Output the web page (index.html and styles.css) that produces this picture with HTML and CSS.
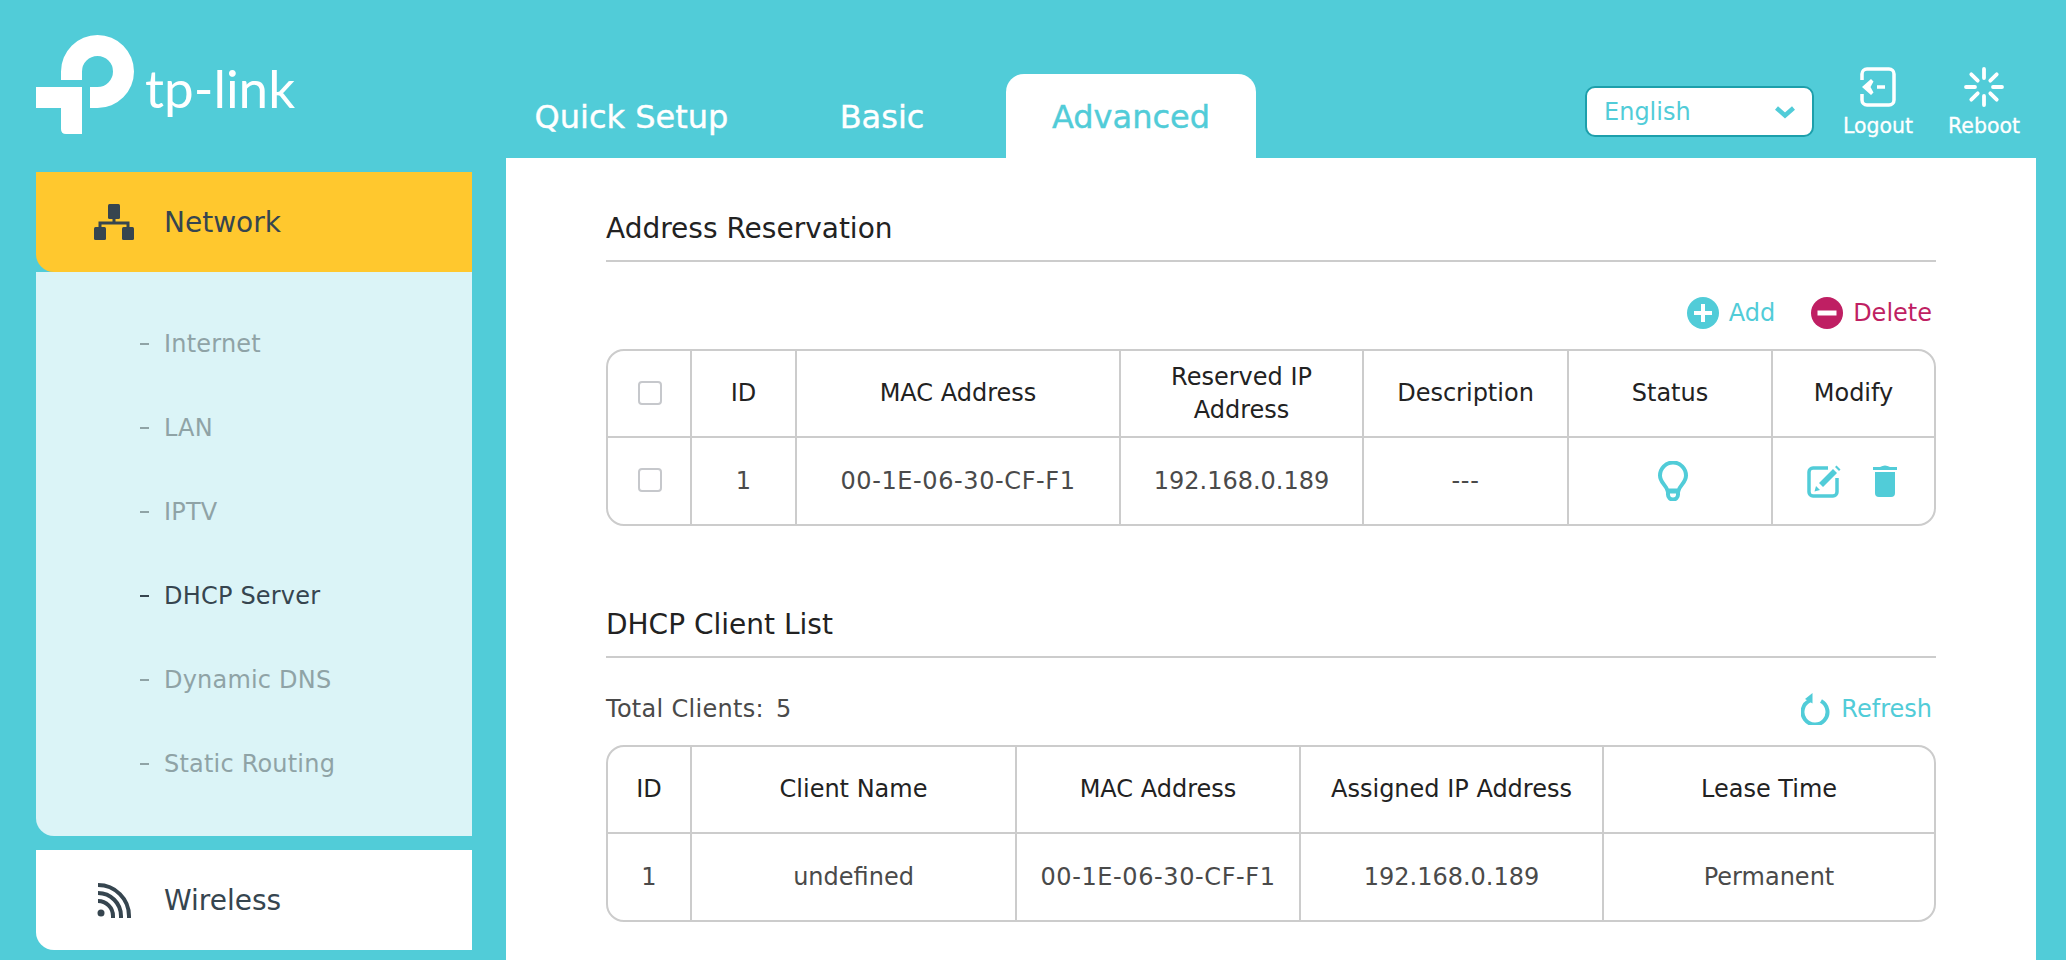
FILE: index.html
```html
<!DOCTYPE html>
<html lang="en">
<head>
  <meta charset="UTF-8" />
  <meta name="viewport" content="width=device-width, initial-scale=1.0" />
  <title>TP-Link - Address Reservation</title>
  <link rel="stylesheet" href="styles.css">
</head>

<body>
  <header class="top">
    <div class="logo">
      <svg class="logo-mark" viewBox="36 35 99 100" width="99" height="100">
        <path d="M61 80V71.500A36.500 36.500 0 1 1 97.500 108H90V87H97.500A15.500 15.500 0 1 0 82 71.500V80Z" fill="#fff"/>
        <path d="M36 87H82V134H66Q61 134 61 129V108H36Z" fill="#fff"/>
      </svg>
      <span class="logo-text">tp-link</span>
    </div>

    <nav class="tabs">
      <a class="tab tab-quick">Quick Setup</a>
      <a class="tab tab-basic">Basic</a>
      <a class="tab active">Advanced</a>
    </nav>

    <div class="tools">
      <div class="lang">
        <span>English</span>
        <svg viewBox="0 0 22 14" width="22" height="14"><path d="M2.500 3l8.500 7.500L19.500 3" fill="none" stroke="#51ccd8" stroke-width="4.500"/></svg>
      </div>
      <a class="tool tool-logout">
        <svg viewBox="0 0 36 40" width="36" height="40">
          <path d="M2 13V7a5 5 0 0 1 5-5h22a5 5 0 0 1 5 5v26a5 5 0 0 1-5 5H7a5 5 0 0 1-5-5v-6" fill="none" stroke="#fff" stroke-width="3.500"/>
          <path d="M2 20l9-8 2.500 2.500-3 5.500 3 5.500L11 28Z" fill="#fff"/>
          <path d="M17 20h8" stroke="#fff" stroke-width="3.500"/>
        </svg>
        <span>Logout</span>
      </a>
      <a class="tool tool-reboot">
        <svg viewBox="0 0 40 40" width="40" height="40" stroke="#fff" stroke-width="3.800" stroke-linecap="round">
          <path d="M20 2v9M20 29v9M2 20h9M29 20h9M7.300 7.300l6.400 6.400M26.300 26.300l6.400 6.400M7.300 32.700l6.400-6.400M26.300 13.700l6.400-6.400"/>
        </svg>
        <span>Reboot</span>
      </a>
    </div>
  </header>

  <div class="page">
    <aside class="side">
      <div class="menu-head current">
        <svg class="menu-icon" viewBox="0 0 40 36" width="40" height="36">
          <rect x="14" y="0" width="12" height="15" rx="1.500" fill="#36454f"/>
          <rect x="0" y="23" width="12" height="13" rx="1.500" fill="#36454f"/>
          <rect x="28" y="23" width="12" height="13" rx="1.500" fill="#36454f"/>
          <path d="M20 14v5M6 25v-6h28v6" fill="none" stroke="#36454f" stroke-width="3"/>
        </svg>
        <span>Network</span>
      </div>
      <ul class="submenu">
        <li>Internet</li>
        <li>LAN</li>
        <li>IPTV</li>
        <li class="on">DHCP Server</li>
        <li>Dynamic DNS</li>
        <li>Static Routing</li>
      </ul>
      <div class="menu-head">
        <svg class="menu-icon wifi" viewBox="0 0 34 35" width="34" height="35" fill="none" stroke="#36454f" stroke-width="4">
          <circle cx="4" cy="30" r="3.500" fill="#36454f" stroke="none"/>
          <path d="M1 18A15 15 0 0 1 16 33V35M1 10A23 23 0 0 1 24 33V35M1 2A31 31 0 0 1 32 33V35"/>
        </svg>
        <span>Wireless</span>
      </div>
    </aside>

    <main class="content">
      <section class="block">
        <h2>Address Reservation</h2>
        <div class="actions right">
          <a class="act add">
            <svg viewBox="0 0 32 32" width="32" height="32"><circle cx="16" cy="16" r="16" fill="#51ccd8"/><path d="M16 7v18M7 16h18" stroke="#fff" stroke-width="4"/></svg>
            Add
          </a>
          <a class="act del">
            <svg viewBox="0 0 32 32" width="32" height="32"><circle cx="16" cy="16" r="16" fill="#bf1f63"/><path d="M6.500 16h19" stroke="#fff" stroke-width="5"/></svg>
            Delete
          </a>
        </div>
        <div class="grid-wrap">
          <table class="grid">
            <colgroup>
              <col class="w84"><col class="w105"><col class="w324"><col class="w243"><col class="w205"><col class="w204"><col>
            </colgroup>
            <tr>
              <th><input type="checkbox" class="check"></th>
              <th>ID</th>
              <th>MAC Address</th>
              <th>Reserved IP<br>Address</th>
              <th>Description</th>
              <th>Status</th>
              <th>Modify</th>
            </tr>
            <tr>
              <td><input type="checkbox" class="check"></td>
              <td>1</td>
              <td class="mac">00-1E-06-30-CF-F1</td>
              <td>192.168.0.189</td>
              <td class="mac">---</td>
              <td>
                <svg class="row-icon" viewBox="0 0 30 40" width="30" height="40" fill="none" stroke="#51ccd8" stroke-width="4">
                  <path d="M9.500 29.500C8 24 2 21.500 2 14.500a13 13 0 0 1 26 0c0 7-6 9.500-7.500 15Z"/>
                  <path d="M10 30.500h10v3a5 5 0 0 1-10 0Z"/>
                </svg>
              </td>
              <td>
                <span class="modify">
                  <svg viewBox="0 0 34 34" width="34" height="34">
                    <path d="M21 4H6a4 4 0 0 0-4 4v20a4 4 0 0 0 4 4h20a4 4 0 0 0 4-4V14" fill="none" stroke="#51ccd8" stroke-width="3.500"/>
                    <path d="M12 19L26 5l4 4-14 14ZM9 22l4 4-5.500 1.500ZM28 3l1.500-1.500 4 4L32 7Z" fill="#51ccd8"/>
                  </svg>
                  <svg viewBox="0 0 24 32" width="24" height="32">
                    <path d="M0 3.500h24" stroke="#51ccd8" stroke-width="3"/>
                    <path d="M7 2q5-3 10 0Z" fill="#51ccd8"/>
                    <path d="M2 7h20v21a4 4 0 0 1-4 4H6a4 4 0 0 1-4-4Z" fill="#51ccd8"/>
                  </svg>
                </span>
              </td>
            </tr>
          </table>
        </div>
      </section>

      <section class="block second">
        <h2>DHCP Client List</h2>
        <div class="actions">
          <div class="total">Total Clients:<b>5</b></div>
          <a class="act add refresh">
            <svg viewBox="0 0 30 32" width="30" height="32" fill="none">
              <path d="M9 7.500a12.500 12.500 0 1 0 11 .5" stroke="#51ccd8" stroke-width="4"/>
              <path d="M11.500 0v10.500L4 6Z" fill="#51ccd8"/>
            </svg>
            Refresh
          </a>
        </div>
        <div class="grid-wrap">
          <table class="grid">
            <colgroup>
              <col class="w84"><col class="w325"><col class="w284"><col class="w303"><col>
            </colgroup>
            <tr>
              <th>ID</th>
              <th>Client Name</th>
              <th>MAC Address</th>
              <th>Assigned IP Address</th>
              <th>Lease Time</th>
            </tr>
            <tr>
              <td>1</td>
              <td>undefined</td>
              <td class="mac">00-1E-06-30-CF-F1</td>
              <td>192.168.0.189</td>
              <td>Permanent</td>
            </tr>
          </table>
        </div>
      </section>
    </main>
  </div>
</body>
</html>
```

FILE: styles.css
```css
* {
  box-sizing: border-box;
}

html, body {
  height: 960px;
  overflow: hidden;
}

body {
  margin: 0;
  background: #51ccd8;
  color: #36454f;
  font-family: "DejaVu Sans", Verdana, sans-serif;
}

.top {
  display: flex;
  height: 158px;
}

.logo {
  display: flex;
  align-items: flex-start;
  width: 486px;
  padding: 35px 0 0 36px;
}

.logo-text {
  margin: 23px 0 0 10px;
  color: #fff;
  font-family: Lato, sans-serif;
  font-size: 53px;
  font-weight: 400;
  line-height: 60px;
}

.tabs {
  display: flex;
  align-items: flex-end;
  width: 1099px;
}

.tab {
  display: flex;
  align-items: center;
  justify-content: center;
  height: 84px;
  padding-top: 2px;
  color: #fff;
  font-size: 32px;
  -webkit-text-stroke: 0.4px;
}

.tab-quick {
  width: 291px;
}

.tab-basic {
  width: 229px;
  padding-right: 19px;
}

.tab.active {
  width: 250px;
  background: #fff;
  color: #51ccd8;
  border-radius: 18px 18px 0 0;
}

.tools {
  display: flex;
  align-items: flex-start;
  flex: 1;
}

.lang {
  display: flex;
  align-items: center;
  justify-content: space-between;
  width: 229px;
  height: 51px;
  margin-top: 86px;
  padding: 0 16px 0 17px;
  background: #fff;
  border: 2px solid #1d9fab;
  border-radius: 10px;
  color: #51ccd8;
  font-size: 24px;
}

.tool {
  display: flex;
  flex-direction: column;
  align-items: center;
  margin-top: 67px;
  color: #fff;
  font-size: 20.500px;
  -webkit-text-stroke: 0.3px;
}

.tool span {
  margin-top: 7px;
}

.tool-logout {
  width: 90px;
  margin-left: 19px;
}

.tool-reboot {
  width: 90px;
  margin-left: 16px;
}

.page {
  display: flex;
  align-items: flex-start;
  padding-left: 36px;
}

.side {
  width: 436px;
  margin-top: 14px;
}

.menu-head {
  display: flex;
  align-items: center;
  height: 100px;
  padding-left: 58px;
  background: #fff;
  border-radius: 0 0 0 18px;
  font-size: 28px;
}

.menu-head span {
  margin-left: 30px;
}

.menu-head.current {
  background: #ffc82e;
}

.wifi {
  margin-left: 3px;
  margin-right: 3px;
}

.submenu {
  margin: 0 0 14px;
  padding: 29px 0 31px 103px;
  height: 564px;
  list-style: none;
  background: #dbf4f7;
  border-radius: 0 0 0 18px;
  color: #8fa3a6;
  font-size: 24px;
  letter-spacing: 0.2px;
}

.submenu li {
  position: relative;
  display: flex;
  align-items: center;
  height: 84px;
  padding: 1px 0 0 25px;
}

.submenu li::before {
  content: "";
  position: absolute;
  left: 1px;
  top: 42px;
  width: 9px;
  height: 2px;
  background: currentColor;
}

.submenu li.on {
  color: #36454f;
}

.content {
  width: 1530px;
  height: 802px;
  margin-left: 34px;
  padding: 55px 100px 0;
  background: #fff;
  color: #4a4a4a;
}

.block h2 {
  margin: 0;
  height: 49px;
  padding-top: 1px;
  border-bottom: 2px solid #ccc;
  color: #222;
  font-size: 28px;
  font-weight: 400;
  line-height: 30px;
}

.second {
  margin-top: 83px;
}

.actions {
  display: flex;
  align-items: center;
  justify-content: space-between;
  height: 87px;
  padding: 15px 4px 0 0;
}

.actions.right {
  justify-content: flex-end;
}

.act {
  display: flex;
  align-items: center;
  gap: 10px;
  font-size: 24px;
}

.add {
  color: #51ccd8;
}

.del {
  margin-left: 36px;
  color: #bf1f63;
}

.total {
  margin-top: -1px;
  font-size: 24px;
  letter-spacing: 0.3px;
}

.total b {
  margin-left: 12px;
  font-weight: 400;
}

.grid-wrap {
  border: 2px solid #ccc;
  border-radius: 18px;
  overflow: hidden;
}

.grid {
  width: 100%;
  table-layout: fixed;
  border-collapse: separate;
  border-spacing: 0;
  font-size: 24px;
}

.grid th, .grid td {
  height: 86px;
  padding: 0;
  border-right: 2px solid #ccc;
  text-align: center;
  vertical-align: middle;
  line-height: 33px;
}

.grid th:last-child, .grid td:last-child {
  border-right: 0;
}

.grid th {
  height: 87px;
  border-bottom: 2px solid #ccc;
  color: #222;
  font-weight: 400;
}

.grid .mac {
  letter-spacing: 0.6px;
}

.w84 { width: 84px; }
.w105 { width: 105px; }
.w204 { width: 204px; }
.w205 { width: 205px; }
.w243 { width: 243px; }
.w284 { width: 284px; }
.w303 { width: 303px; }
.w324 { width: 324px; }
.w325 { width: 325px; }

.check {
  appearance: none;
  display: block;
  width: 24px;
  height: 24px;
  margin: -2px 0 0 30px;
  border: 2px solid #c6c8cc;
  border-radius: 4px;
  background: #fff;
}

.row-icon {
  display: block;
  margin: 0 auto;
  transform: translateX(3px);
}

.modify {
  display: flex;
  align-items: center;
  justify-content: center;
  gap: 32px;
  padding-right: 4px;
}
```
